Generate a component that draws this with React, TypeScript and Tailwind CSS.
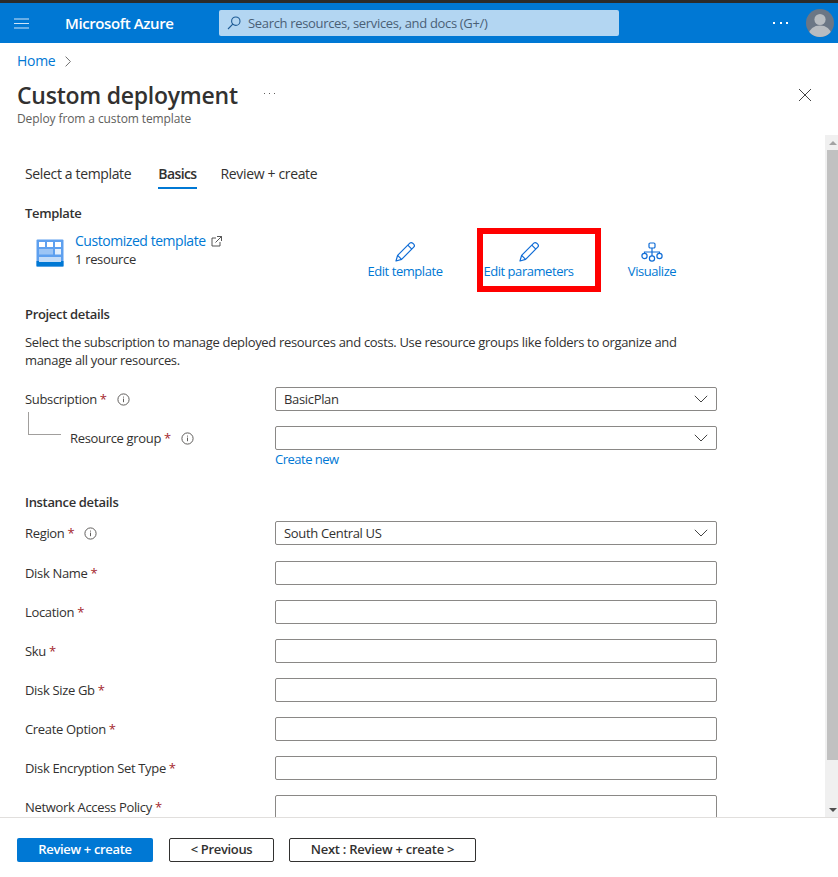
const blue = "text-[#0078d4]";

function Pencil() {
  return (
    <svg width="22" height="22" viewBox="0 0 22 22" fill="none" stroke="#0f6cd6" strokeWidth="1.2">
      <path d="M2 20l1.6-5.6L15.8 2.2c.8-.8 2-.8 2.9 0l1 1c.8.8.8 2.1 0 2.9L7.6 18.4 2 20z" strokeLinejoin="round" />
      <path d="M13.8 4.2l4 4M3.6 14.4l4 4" />
    </svg>
  );
}

function Hierarchy() {
  return (
    <svg width="22" height="20" viewBox="0 0 22 20" fill="none" stroke="#0f6cd6" strokeWidth="1.2">
      <rect x="8" y="1" width="6" height="5" rx="1.2" />
      <circle cx="3.5" cy="14" r="2.6" />
      <circle cx="11" cy="16.5" r="2.6" />
      <circle cx="18.5" cy="14" r="2.6" />
      <path d="M11 6v8M3.5 11.4V10h15v1.4" />
    </svg>
  );
}

function TemplateIcon() {
  return (
    <svg width="28" height="28" viewBox="0 0 28 28" className="shrink-0">
      <rect x="0.5" y="0.5" width="27" height="27" rx="1" fill="#5ea0ef" />
      <rect x="0.5" y="22" width="27" height="5.5" fill="#0078d4" />
      <rect x="3" y="3" width="6" height="5" fill="#ffffff" />
      <rect x="11" y="3" width="6" height="5" fill="#ffffff" />
      <rect x="19" y="3" width="6" height="5" fill="#ffffff" />
      <rect x="3" y="10" width="14" height="5.5" fill="#9cc5f5" />
      <rect x="19" y="10" width="6" height="5.5" fill="#e3effc" />
      <rect x="3" y="18" width="22" height="5" fill="#c3dcf8" />
    </svg>
  );
}

function Info() {
  return (
    <svg width="13" height="13" viewBox="0 0 13 13" fill="none" stroke="#605e5c" strokeWidth="1" className="shrink-0">
      <circle cx="6.5" cy="6.5" r="5.6" />
      <path d="M6.5 5.6v3.6M6.5 3.6v1" />
    </svg>
  );
}

function Chevron() {
  return (
    <svg width="14" height="8" viewBox="0 0 14 8" fill="none" stroke="#444444" strokeWidth="1">
      <path d="M0.8 0.8L7 7l6.2-6.2" />
    </svg>
  );
}

function Star() {
  return <span className="text-[#a4262c] ml-[3px]">*</span>;
}

function Field({ label, info, value, select }: { label: string; info?: boolean; value?: string; select?: boolean }) {
  return (
    <div className="flex items-center h-6">
      <div className="w-[250px] flex items-center shrink-0">
        <span>{label}</span>
        <Star />
        {info && <span className="ml-[10px] flex"><Info /></span>}
      </div>
      <Box value={value} select={select} />
    </div>
  );
}

function Box({ value, select }: { value?: string; select?: boolean }) {
  return (
    <div className="w-[442px] h-6 shrink-0 border border-[#8a8886] rounded-[2px] flex items-center justify-between pl-2 pr-[8px]">
      <span>{value}</span>
      {select && <Chevron />}
    </div>
  );
}

function Action({ label, hierarchy, highlight }: { label: string; hierarchy?: boolean; highlight?: boolean }) {
  return (
    <div className={`relative flex flex-col items-center ${highlight ? "w-[123px]" : "w-[124px]"} ${blue}`}>
      <div className="h-[22px] flex items-center justify-center">{hierarchy ? <Hierarchy /> : <Pencil />}</div>
      <span className="-mt-[1px] leading-[18px] tracking-[-0.45px] whitespace-nowrap">{label}</span>
      {highlight && <div className="absolute left-[10px] top-[-13px] w-[124px] h-[64px] border-[6px] border-[#ff0000]" />}
    </div>
  );
}

export default function App() {
  return (
    <div className="h-[877px] w-[838px] flex flex-col overflow-hidden bg-white text-[#323130] text-[13px] leading-[18px] font-['Open_Sans','Noto_Sans',sans-serif] tracking-[-0.33px]">
      <div className="h-[3px] bg-[#2b2b2b] shrink-0" />
      <header className="h-10 bg-[#0078d4] flex items-center shrink-0 text-white">
        <svg width="15" height="11" viewBox="0 0 15 11" stroke="#cfe4f7" strokeWidth="1.2" className="ml-[14px]">
          <path d="M0 1h15M0 5.5h15M0 10h15" />
        </svg>
        <span className="ml-[36px] text-[15px] font-semibold tracking-[-0.4px] w-[154px] whitespace-nowrap">Microsoft Azure</span>
        <div className="w-[400px] h-[26px] bg-[#b3d6f2] rounded-[2px] flex items-center text-[#323130] pl-2">
          <svg width="14" height="14" viewBox="0 0 14 14" fill="none" stroke="#1d5a94" strokeWidth="1.1">
            <circle cx="8.8" cy="5.2" r="4.2" />
            <path d="M5.8 8.2L1 13" />
          </svg>
          <span className="ml-[7px] text-[#4a6076] whitespace-nowrap">Search resources, services, and docs (G+/)</span>
        </div>
        <div className="ml-[154px] flex gap-[4.5px]">
          <span className="w-[2px] h-[2px] bg-white" />
          <span className="w-[2px] h-[2px] bg-white" />
          <span className="w-[2px] h-[2px] bg-white" />
        </div>
        <svg width="28" height="28" viewBox="0 0 28 28" className="ml-[18px]">
          <defs>
            <clipPath id="avatar"><circle cx="14" cy="14" r="14" /></clipPath>
          </defs>
          <g clipPath="url(#avatar)">
            <rect width="28" height="28" fill="#6b7685" />
            <circle cx="14" cy="10.5" r="5.6" fill="#b8bcc1" />
            <ellipse cx="14" cy="25" rx="11" ry="8.5" fill="#b8bcc1" />
          </g>
        </svg>
      </header>

      <div className="shrink-0 h-[92px] pl-[17px] pr-[27px] flex flex-col">
        <div className="mt-[9px] flex items-center gap-[10px] text-[14px] tracking-[-0.3px]">
          <span className="text-[#0078d4]">Home</span>
          <svg width="6" height="11" viewBox="0 0 6 11" fill="none" stroke="#707070" strokeWidth="1">
            <path d="M0.6 0.6L5.4 5.5 0.6 10.4" />
          </svg>
        </div>
        <div className="mt-[11px] flex items-center justify-between h-[28px]">
          <div className="flex items-center">
            <h1 className="text-[23px] font-semibold tracking-[-0.25px] leading-[28px] whitespace-nowrap">Custom deployment</h1>
            <span className="ml-[26px] flex gap-[3.5px] mb-[3px]">
              <i className="w-[1.5px] h-[1.5px] bg-[#605e5c]" />
              <i className="w-[1.5px] h-[1.5px] bg-[#605e5c]" />
              <i className="w-[1.5px] h-[1.5px] bg-[#605e5c]" />
            </span>
          </div>
          <svg width="12" height="12" viewBox="0 0 12 12" stroke="#444444" strokeWidth="1">
            <path d="M0 0l12 12M12 0L0 12" />
          </svg>
        </div>
        <p className="text-[12px] leading-[14px] tracking-[-0.1px] text-[#605e5c] mt-[3px]">Deploy from a custom template</p>
      </div>

      <div className="flex-1 min-h-0 flex">
        <main className="flex-1 min-w-0 overflow-hidden pl-[25px] pt-[30px]">
          <nav className="flex gap-[27px] h-[25px] text-[14px] tracking-[-0.35px]">
            <span>Select a template</span>
            <span className="font-semibold tracking-[-0.6px] relative">
              Basics
              <i className="absolute left-0 right-0 top-[22px] h-[2px] bg-[#0078d4]" />
            </span>
            <span className="-ml-[3px]">Review + create</span>
          </nav>
          <h2 className="font-semibold mt-[14px]">Template</h2>
          <div className="flex mt-[9px] h-[54px]">
            <div className="flex w-[342px]">
              <div className="ml-[11px] mt-[8px]"><TemplateIcon /></div>
              <div className="ml-[11px] mt-[1px]">
                <div className="flex items-center gap-[5px]">
                  <span className={`${blue} text-[14px] tracking-[-0.45px]`}>Customized template</span>
                  <svg width="11" height="11" viewBox="0 0 11 11" fill="none" stroke="#444444" strokeWidth="0.9">
                    <path d="M5 2H1v8h8V6M6 .5h4.5V5M10.5.5L4.5 6.5" />
                  </svg>
                </div>
                <div>1 resource</div>
              </div>
            </div>
            <div className="flex mt-[10px] -ml-[24px]">
              <Action label="Edit template" />
              <Action label="Edit parameters" highlight />
              <Action label="Visualize" hierarchy />
            </div>
          </div>

          <h2 className="font-semibold mt-[20px]">Project details</h2>
          <p className="mt-[10px] w-[680px]">Select the subscription to manage deployed resources and costs. Use resource groups like folders to organize and manage all your resources.</p>

          <div className="mt-[18px]">
            <Field label="Subscription" info value="BasicPlan" select />
            <div className="flex items-center h-6 mt-[15px] relative">
              <div className="absolute left-[3px] top-[-14px] w-[33px] h-[23px] border-l border-b border-[#a19f9d]" />
              <div className="w-[250px] pl-[45px] flex items-center shrink-0">
                <span>Resource group</span>
                <Star />
                <span className="ml-[10px] flex"><Info /></span>
              </div>
              <Box select />
            </div>
            <div className={`ml-[250px] tracking-[-0.5px] ${blue}`}>Create new</div>
          </div>

          <h2 className="font-semibold mt-[25px]">Instance details</h2>
          <div className="mt-[10px] mb-4">
            <Field label="Region" info value="South Central US" select />
          </div>
          <div className="flex flex-col gap-[15px]">
            <Field label="Disk Name" />
            <Field label="Location" />
            <Field label="Sku" />
            <Field label="Disk Size Gb" />
            <Field label="Create Option" />
            <Field label="Disk Encryption Set Type" />
            <Field label="Network Access Policy" />
          </div>
        </main>
        <aside className="w-[13px] shrink-0 bg-[#f0f0f0] flex flex-col items-center pl-[2px]">
          <div className="h-[15px] flex items-center justify-center">
            <div className="w-0 h-0 border-x-[4px] border-x-transparent border-b-[4px] border-b-[#a3a3a3]" />
          </div>
          <div className="w-full h-[610px] bg-[#c1c1c1]" />
          <div className="flex-1" />
          <div className="h-[15px] flex items-center justify-center">
            <div className="w-0 h-0 border-x-[4px] border-x-transparent border-t-[4px] border-t-[#505050]" />
          </div>
        </aside>
      </div>

      <footer className="h-[60px] shrink-0 border-t border-[#e1dfdd] flex items-start pt-[20px] pl-[17px]">
        <button className="w-[136px] h-6 pb-[2px] bg-[#0078d4] rounded-[2px] text-white font-semibold">Review + create</button>
        <button className="ml-4 w-[105px] h-6 pb-[2px] border border-[#323130] rounded-[2px] font-semibold">&lt; Previous</button>
        <button className="ml-[15px] w-[187px] h-6 pb-[2px] border border-[#323130] rounded-[2px] font-semibold tracking-[-0.25px]">Next : Review + create &gt;</button>
      </footer>
    </div>
  );
}
